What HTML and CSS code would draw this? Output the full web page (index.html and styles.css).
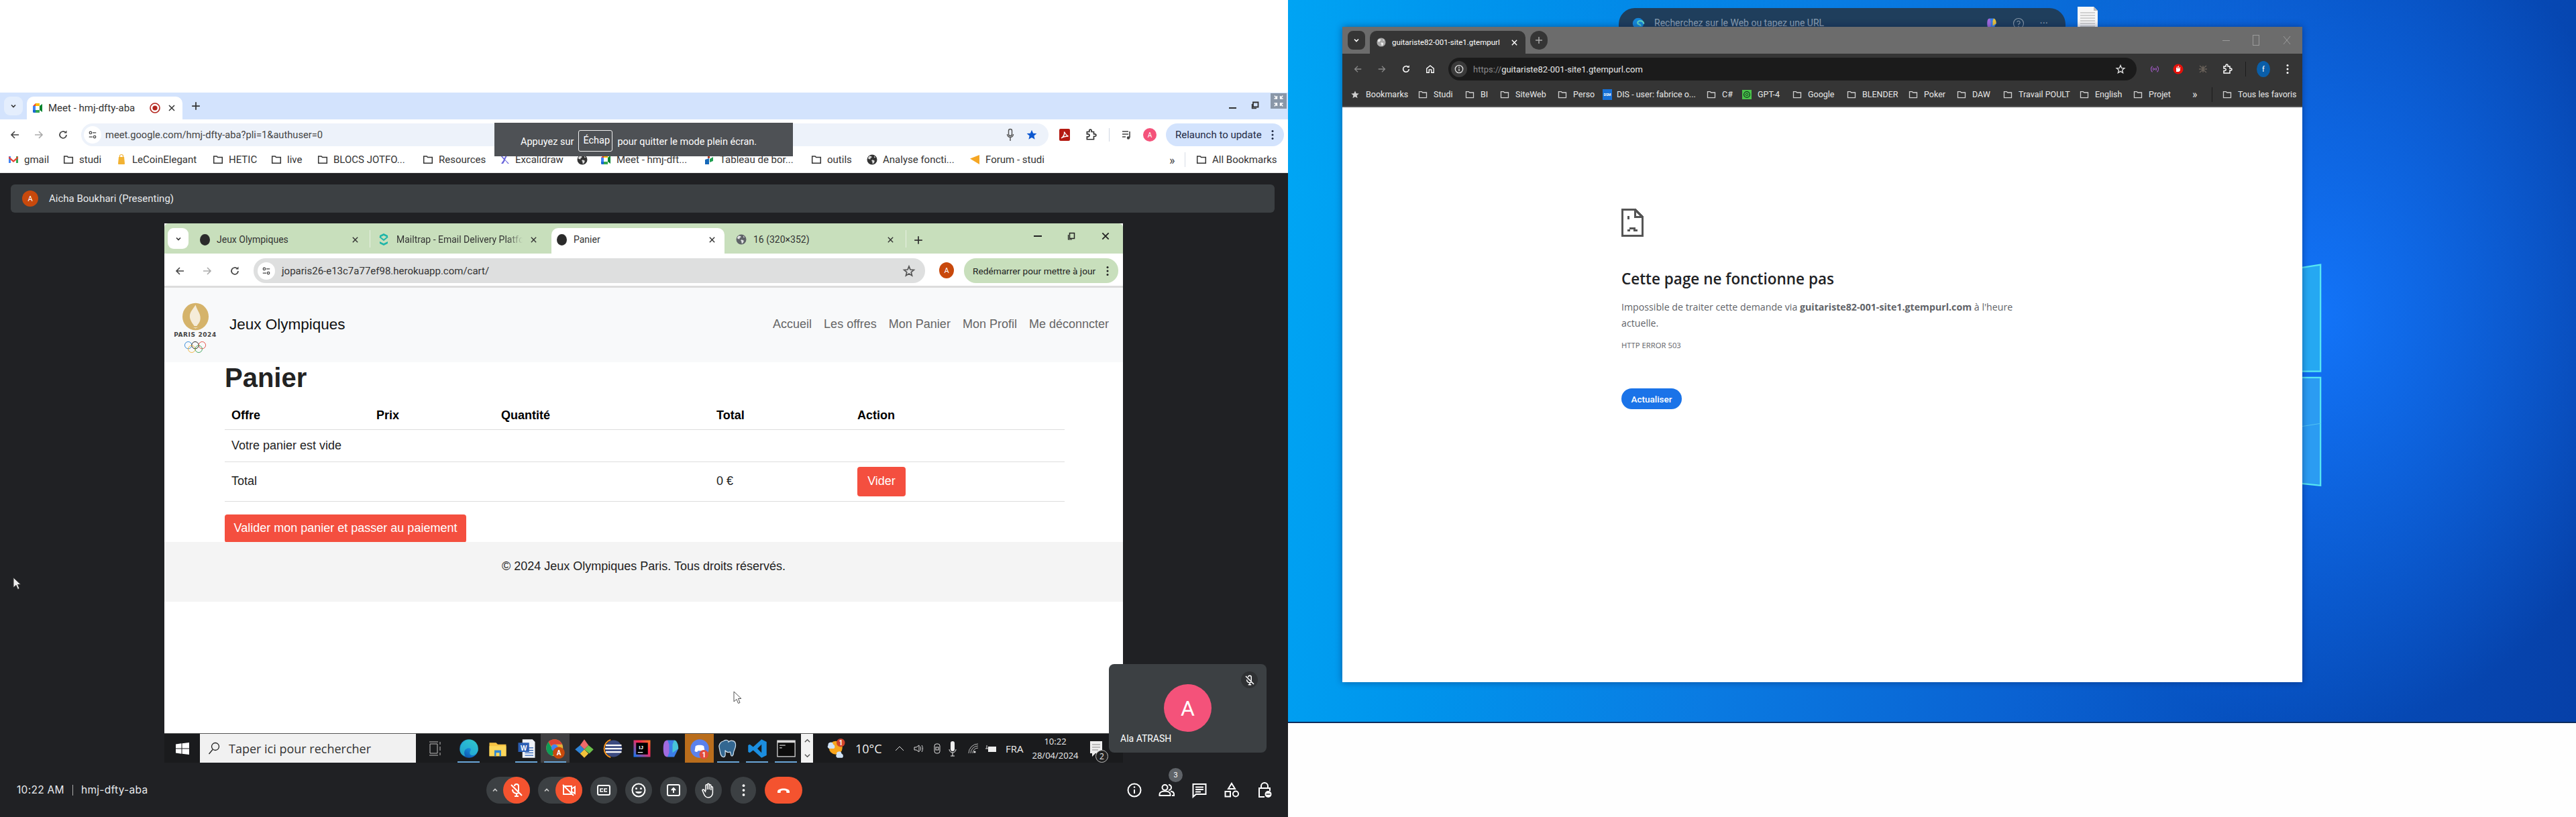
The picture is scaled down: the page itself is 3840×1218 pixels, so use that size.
FILE: index.html
```html
<!DOCTYPE html>
<html lang="fr">
<head>
<meta charset="utf-8">
<title>Meet - hmj-dfty-aba</title>
<link rel="stylesheet" href="styles.css">
</head>
<body>
<svg class="defs" aria-hidden="true">
  <symbol id="folder" viewBox="0 0 16 16"><path d="M1.7 3h4.4l1.5 1.6h6.7v8.7H1.7z" fill="none" stroke="currentColor" stroke-width="1.5"/></symbol>
  <symbol id="globe" viewBox="0 0 16 16"><circle cx="8" cy="8" r="7.5" fill="currentColor"/><path d="M4 2.6l3 .4.6 1.6-2 1.2-.3 1.6-2.4-.4-1-1.5zM8.2 8.3l3.2.9.2 2-1.8 2.8-1.2-.3-.3-2.6-1.200-1.300zM11 2.500l2.200 2.300-1.900.5z" fill="#fff" opacity=".82"/></symbol>
  <symbol id="x" viewBox="0 0 12 12"><path d="M2 2l8 8M10 2l-8 8" stroke="currentColor" stroke-width="1.500" fill="none"/></symbol>
  <symbol id="plus" viewBox="0 0 12 12"><path d="M6 1v10M1 6h10" stroke="currentColor" stroke-width="1.500" fill="none"/></symbol>
  <symbol id="chev" viewBox="0 0 12 12"><path d="M3 4.500l3 3 3-3" stroke="currentColor" stroke-width="1.600" fill="none"/></symbol>
  <symbol id="back" viewBox="0 0 16 16"><path d="M14 8H3M8 3L3 8l5 5" stroke="currentColor" stroke-width="1.600" fill="none"/></symbol>
  <symbol id="fwd" viewBox="0 0 16 16"><path d="M2 8h11M8 3l5 5-5 5" stroke="currentColor" stroke-width="1.600" fill="none"/></symbol>
  <symbol id="reload" viewBox="0 0 16 16"><path d="M13 8a5 5 0 1 1-1.500-3.600" stroke="currentColor" stroke-width="1.700" fill="none"/><path d="M13.500 1.500v4h-4z" fill="currentColor"/></symbol>
  <symbol id="tune" viewBox="0 0 16 16"><path d="M8 4.500h6M2 11.500h6" stroke="currentColor" stroke-width="1.500"/><circle cx="4.500" cy="4.500" r="2" fill="none" stroke="currentColor" stroke-width="1.400"/><circle cx="11.500" cy="11.500" r="2" fill="none" stroke="currentColor" stroke-width="1.400"/></symbol>
  <symbol id="star" viewBox="0 0 16 16"><path d="M8 1.600l1.900 4.300 4.700.4-3.600 3.100 1.100 4.600L8 11.600 3.900 14l1.100-4.600-3.600-3.100 4.700-.4z" fill="currentColor"/></symbol>
  <symbol id="star-o" viewBox="0 0 16 16"><path d="M8 2.500l1.600 3.900 4.200.3-3.200 2.700 1 4.100L8 11.300l-3.600 2.200 1-4.100-3.200-2.700 4.200-.3z" fill="none" stroke="currentColor" stroke-width="1.400"/></symbol>
  <symbol id="dots" viewBox="0 0 4 16"><circle cx="2" cy="2.500" r="1.500" fill="currentColor"/><circle cx="2" cy="8" r="1.500" fill="currentColor"/><circle cx="2" cy="13.500" r="1.500" fill="currentColor"/></symbol>
  <symbol id="puzzle" viewBox="0 0 16 16"><path d="M3 4h3V2.500a1.500 1.500 0 0 1 3 0V4h3v3h1.500a1.500 1.500 0 0 1 0 3H12v4H3v-3.500h1.500a1.700 1.700 0 0 0 0-3.500H3z" fill="none" stroke="currentColor" stroke-width="1.500"/></symbol>
  <symbol id="meeticon" viewBox="0 0 16 16"><path d="M1 5l4-4v4z" fill="#ea4335"/><path d="M1 5h4v6H1z" fill="#4285f4"/><path d="M1 11h4v4H2.500A1.500 1.500 0 0 1 1 13.500z" fill="#1967d2"/><path d="M5 1h6v4H5z" fill="#fbbc04"/><path d="M5 11h6v4H5z" fill="#34a853"/><path d="M5 5h6v6H5z" fill="#fff"/><path d="M11 5l4-3v12l-4-3z" fill="#00832d"/></symbol>
  <symbol id="micoff" viewBox="0 0 24 24"><path d="M9 6a3 3 0 0 1 6 0v6a3 3 0 0 1-.5 1.700M6 11a6 6 0 0 0 9 5.200M12 17v4M9 21h6" fill="none" stroke="currentColor" stroke-width="2"/><path d="M4 4l16 16" stroke="currentColor" stroke-width="2"/></symbol>
</svg>

<div class="screens">
  <section class="screen-left">
    <div class="blank-top"></div>
    <div class="meet-chrome">
      <div class="mc-tabs">
        <span class="mc-chev"><svg class="ic12"><use href="#chev"/></svg></span>
        <div class="mc-tab">
          <svg class="ic16"><use href="#meeticon"/></svg>
          <span class="mc-title">Meet - hmj-dfty-aba</span>
          <svg class="ic-rec" viewBox="0 0 16 16"><circle cx="8" cy="8" r="7" fill="none" stroke="#b3261e" stroke-width="1.600"/><circle cx="8" cy="8" r="3.600" fill="#b3261e"/></svg>
          <svg class="ic12 mc-close"><use href="#x"/></svg>
        </div>
        <svg class="ic14 mc-new"><use href="#plus"/></svg>
        <div class="mc-winbtns">
          <span class="mc-min"></span>
          <svg class="ic-rest" viewBox="0 0 12 12"><path d="M3 1.500h7.500v7H3z" fill="none" stroke="#333" stroke-width="1.800"/><path d="M1.500 4v6.500H8" fill="none" stroke="#333" stroke-width="1.400"/></svg>
          <span class="mc-exit"><svg viewBox="0 0 20 24" class="ic-exit"><path d="M3 3l4 5M7 3.500V8H2.500M17 3l-4 5M13 3.500V8h4.500M3 21l4-5M7 20.500V16H2.500M17 21l-4-5M13 20.500V16h4.500" stroke="#fff" stroke-width="1.800" fill="none"/></svg></span>
        </div>
      </div>
      <div class="mc-toolbar">
        <div class="navbox"><span class="nav"><svg class="ic16"><use href="#back"/></svg></span><span class="nav dim"><svg class="ic16"><use href="#fwd"/></svg></span><span class="nav"><svg class="ic16"><use href="#reload"/></svg></span></div>
        <div class="mc-omni">
          <span class="site-chip"><svg class="ic14"><use href="#tune"/></svg></span>
          <span class="mc-url">meet.google.com/hmj-dfty-aba?pli=1&amp;authuser=0</span>
          <svg class="ic-mic" viewBox="0 0 12 20"><rect x="3.500" y="1.500" width="5" height="10" rx="2.500" fill="none" stroke="#555" stroke-width="1.500"/><path d="M1.500 9a4.500 4.500 0 0 0 9 0M6 14v5" stroke="#555" stroke-width="1.500" fill="none"/></svg>
          <svg class="ic18 mc-star"><use href="#star"/></svg>
        </div>
        <div class="mc-tools">
          <svg class="ic-pdf" viewBox="0 0 16 18"><rect width="16" height="18" rx="2" fill="#b41a12"/><path d="M3 14c3-2 5-6 4.500-9.500C10 9 11 10 13.500 11c-3 0-7 .5-10.500 3z" fill="none" stroke="#fff" stroke-width="1.300"/></svg>
          <svg class="ic18 dark"><use href="#puzzle"/></svg>
          <span class="mc-sep"></span>
          <svg class="ic-queue" viewBox="0 0 16 16"><path d="M1 3h9M1 7h9M1 11h5" stroke="#444" stroke-width="1.600"/><path d="M12 3v9" stroke="#444" stroke-width="1.600"/><circle cx="10" cy="12.500" r="2.200" fill="#444"/></svg>
          <span class="avatar-pink">A</span>
          <span class="relaunch">Relaunch to update<svg class="ic-dots"><use href="#dots"/></svg></span>
        </div>
      </div>
      <div class="mc-bookmarks">
        <span class="bk"><svg class="ic16" viewBox="0 0 16 16"><path d="M1 3h3v10H1z" fill="#4285f4"/><path d="M12 3h3v10h-3z" fill="#34a853"/><path d="M1 3l7 6 7-6v3l-7 6-7-6z" fill="#ea4335"/></svg>gmail</span>
        <span class="bk"><svg class="ic16"><use href="#folder"/></svg>studi</span>
        <span class="bk"><svg class="ic16" viewBox="0 0 16 16"><path d="M4 4h8l1 10a1 1 0 0 1-1 1H4a1 1 0 0 1-1-1z" fill="#f2b233"/><path d="M5.500 4V2.500a2.500 2 0 0 1 5 0V4" fill="none" stroke="#f2b233" stroke-width="1.200"/></svg>LeCoinElegant</span>
        <span class="bk"><svg class="ic16"><use href="#folder"/></svg>HETIC</span>
        <span class="bk"><svg class="ic16"><use href="#folder"/></svg>live</span>
        <span class="bk"><svg class="ic16"><use href="#folder"/></svg>BLOCS JOTFO...</span>
        <span class="bk"><svg class="ic16"><use href="#folder"/></svg>Resources</span>
        <span class="bk"><svg class="ic16" viewBox="0 0 16 16"><path d="M2 2l5 6-4 6h3l3-5 4 5h2L9 8l3-6h-2L7.500 6 4 2z" fill="#6965db"/></svg>Excalidraw</span>
        <span class="bk"><svg class="ic16 dark"><use href="#globe"/></svg></span>
        <span class="bk"><svg class="ic16"><use href="#meeticon"/></svg>Meet - hmj-dft...</span>
        <span class="bk"><svg class="ic16" viewBox="0 0 16 16"><path d="M2 8l6-2v9H2z" fill="#1668b8"/><path d="M9 7l5-3v6l-5 2z" fill="#1e9e50"/><path d="M6 1h3v5H6z" fill="#b5442c"/></svg>Tableau de bor...</span>
        <span class="bk"><svg class="ic16"><use href="#folder"/></svg>outils</span>
        <span class="bk"><svg class="ic16 dark"><use href="#globe"/></svg>Analyse foncti...</span>
        <span class="bk"><svg class="ic16" viewBox="0 0 16 16"><path d="M15 1v14L1 6.500z" fill="#f5a623"/></svg>Forum - studi</span>
        <span class="bk-more">»</span>
        <span class="bk-sep"></span>
        <span class="bk"><svg class="ic16"><use href="#folder"/></svg>All Bookmarks</span>
      </div>
    </div>

    <div class="stage">
      <div class="presenter"><span class="avatar-orange">A</span>Aicha Boukhari (Presenting)</div>

      <div class="shared">
        <div class="sw-tabs">
          <span class="sw-chev"><svg class="ic12"><use href="#chev"/></svg></span>
          <div class="sw-tab sw-t1"><span class="blob"></span><span class="sw-tt">Jeux Olympiques</span><svg class="ic11"><use href="#x"/></svg></div>
          <span class="sw-div"></span>
          <div class="sw-tab sw-t2"><svg class="ic-mt" viewBox="0 0 16 20"><path d="M2 7V4l6-3 6 3v3l-6-3z M2 13v3l6 3 6-3v-3l-6 3z" fill="#1fb5a8"/><path d="M2 6l6 5 6-5" stroke="#1fb5a8" stroke-width="2" fill="none"/></svg><span class="sw-tt fade">Mailtrap - Email Delivery Platfo</span><svg class="ic11"><use href="#x"/></svg></div>
          <div class="sw-tab sw-active"><span class="blob"></span><span class="sw-tt">Panier</span><svg class="ic11"><use href="#x"/></svg></div>
          <div class="sw-tab sw-t4"><svg class="ic16 greyish"><use href="#globe"/></svg><span class="sw-tt">16 (320×352)</span><svg class="ic11"><use href="#x"/></svg></div>
          <span class="sw-div"></span>
          <svg class="ic14 sw-new"><use href="#plus"/></svg>
          <div class="sw-winbtns"><span class="sw-min"></span><svg class="ic-rest" viewBox="0 0 12 12"><path d="M3.500 1.500h7v8h-7z" fill="none" stroke="#222" stroke-width="1.500"/><path d="M1.500 4v7H7" fill="none" stroke="#222" stroke-width="1.200"/></svg><svg class="ic14 sw-close"><use href="#x"/></svg></div>
        </div>
        <div class="sw-toolbar">
          <div class="navbox sw-nav"><span class="nav"><svg class="ic16"><use href="#back"/></svg></span><span class="nav dim"><svg class="ic16"><use href="#fwd"/></svg></span><span class="nav"><svg class="ic16"><use href="#reload"/></svg></span></div>
          <div class="sw-omni"><span class="site-chip"><svg class="ic14"><use href="#tune"/></svg></span><span class="sw-url">joparis26-e13c7a77ef98.herokuapp.com/cart/</span><svg class="ic20 sw-star"><use href="#star-o"/></svg></div>
          <span class="avatar-orange sw-av">A</span>
          <span class="sw-relaunch">Redémarrer pour mettre à jour<svg class="ic-dots"><use href="#dots"/></svg></span>
        </div>
        <div class="site">
          <header class="site-head">
            <div class="logo">
              <svg class="flame" viewBox="0 0 42 60" preserveAspectRatio="none"><ellipse cx="21" cy="30" rx="20" ry="29" fill="#d5b36a"/><path d="M21 5c-5 12-12 18-7 34 2 6 4 8 5 11h4c1-3 4-6 5-12 2-13-4-19-7-33z" fill="#fff" opacity=".75"/><path d="M16 52c3 2 7 2 10 0l-5 3z" fill="#fff"/></svg>
              <span class="logo-txt">PARIS 2024</span>
              <svg class="rings" viewBox="0 0 36 20"><circle cx="7" cy="7" r="5.500" fill="none" stroke="#2e86d6"/><circle cx="18" cy="7" r="5.500" fill="none" stroke="#222"/><circle cx="29" cy="7" r="5.500" fill="none" stroke="#e4493d"/><circle cx="12.500" cy="13" r="5.500" fill="none" stroke="#eeb23c"/><circle cx="23.500" cy="13" r="5.500" fill="none" stroke="#3da35a"/></svg>
            </div>
            <span class="brand">Jeux Olympiques</span>
            <nav class="site-nav"><a>Accueil</a><a>Les offres</a><a>Mon Panier</a><a>Mon Profil</a><a>Me déconncter</a></nav>
          </header>
          <main class="site-main">
            <h1>Panier</h1>
            <table class="cart">
              <thead><tr><th class="c1">Offre</th><th class="c2">Prix</th><th class="c3">Quantité</th><th class="c4">Total</th><th class="c5">Action</th></tr></thead>
              <tbody>
                <tr class="r1"><td colspan="5">Votre panier est vide</td></tr>
                <tr class="r2"><td>Total</td><td></td><td></td><td>0 €</td><td><span class="btn btn-vider">Vider</span></td></tr>
              </tbody>
            </table>
            <span class="btn btn-valider">Valider mon panier et passer au paiement</span>
          </main>
          <footer class="site-foot">© 2024 Jeux Olympiques Paris. Tous droits réservés.</footer>
          <div class="site-rest"></div>
        </div>
        <div class="win-taskbar">
          <span class="tb-start"><svg class="ic-win" viewBox="0 0 20 18"><path d="M0 2.500L8.500 1.300V8.500H0zM9.500 1.200L20 0v8.500H9.500zM0 9.500h8.500v7.200L0 15.500zM9.500 9.500H20V18L9.500 16.800z" fill="#fff"/></svg></span>
          <span class="tb-search"><svg class="ic-mag" viewBox="0 0 18 20"><circle cx="11" cy="7" r="5.500" fill="none" stroke="#222" stroke-width="1.300"/><path d="M7 11.500L1.500 18" stroke="#222" stroke-width="1.300"/></svg>Taper ici pour rechercher</span>
          <span class="tb-view"><svg class="ic-tv" viewBox="0 0 20 24"><path d="M2 5h11v14H2zM1 2h13M1 22h13M17 2v4M17 9v6M17 18v4" fill="none" stroke="#bbb" stroke-width="1"/></svg></span>
          <div class="tb-apps">
            <span class="app run"><svg class="ic30" viewBox="0 0 24 24"><defs><linearGradient id="edg" x1="0.800" y1="0" x2="0.200" y2="1"><stop offset="0" stop-color="#35c9c0"/><stop offset=".5" stop-color="#1687d9"/><stop offset="1" stop-color="#0b4fa8"/></linearGradient></defs><circle cx="12" cy="12" r="11" fill="url(#edg)"/><path d="M23 14c-1 4-4 6-7 6-2 0-3-1-3-3s2-3 1-5c-1-1-4-1-6 1-2 2-2 6 0 8C2 20 0 15 2 9c2-5 7-8 12-7 6 1 9 6 9 12z" fill="#2fc4d0" opacity=".7"/></svg></span>
            <span class="app"><svg class="ic30" viewBox="0 0 24 24"><path d="M2 5h8l2 2h10v14H2z" fill="#f6c343"/><path d="M2 9h20v12H2z" fill="#fbd75b"/><path d="M8 14h8v7h-2v-4h-4v4H8z" fill="#2f87d3"/></svg></span>
            <span class="app run"><svg class="ic30" viewBox="0 0 24 24"><path d="M7 1h12l3 3v19H7z" fill="#eef2f7"/><path d="M10 11h10M10 14h10M10 17h10M10 20h10" stroke="#2b5fb4"/><rect x="2" y="5" width="13" height="11" fill="#2b5fb4"/><text x="8.500" y="14" class="w-letter">W</text></svg></span>
            <span class="app app-on run"><svg class="ic30" viewBox="0 0 24 24"><circle cx="11" cy="11" r="10" fill="#e0b03a"/><path d="M11 1a10 10 0 0 1 9 6H11a4 4 0 0 0-4 2L3.500 4A10 10 0 0 1 11 1z" fill="#db4437"/><path d="M1 11c0-2 .8-5 2.500-7L7 10c.5 3 2 5 5 5L8 21A10 10 0 0 1 1 11z" fill="#0f9d58"/><circle cx="11" cy="11" r="4" fill="#4285f4"/><circle cx="16" cy="17" r="7" fill="#c8490c"/><text x="16" y="20" class="c-letter">A</text></svg></span>
            <span class="app"><svg class="ic30" viewBox="0 0 24 24"><path d="M12 1l5 7-5 5-5-5z" fill="#ef6a6a"/><path d="M7 8l5 5-5 5-6-5z" fill="#2f83d6"/><path d="M17 8l6 5-5 5-6-5z" fill="#6cc04a"/><path d="M12 13l5 5-5 5-5-5z" fill="#f2c23b"/></svg></span>
            <span class="app"><svg class="ic30" viewBox="0 0 24 24"><circle cx="12.500" cy="12" r="10" fill="#3b4a80"/><path d="M3 8h19M2.500 12h20M3 16h19" stroke="#fff" stroke-width="1.800"/><path d="M9 1.500A11 11 0 0 0 9 22.500" fill="none" stroke="#f7941e" stroke-width="1.500"/></svg></span>
            <span class="app"><svg class="ic30" viewBox="0 0 24 24"><defs><linearGradient id="ij" x1="0" y1="1" x2="1" y2="0"><stop offset="0" stop-color="#087cfa"/><stop offset=".6" stop-color="#fe2857"/><stop offset="1" stop-color="#fc801d"/></linearGradient></defs><rect x="2" y="2" width="20" height="20" fill="url(#ij)"/><rect x="5" y="5" width="14" height="14" fill="#000"/><text x="11" y="13" class="ij-letter">IJ</text><path d="M7 16.500h6" stroke="#fff"/></svg></span>
            <span class="app"><svg class="ic30" viewBox="0 0 24 24"><path d="M8 2h8l5 10-5 10H8z" fill="#3b7ee8"/><path d="M8 2c-4 0-5 4-5 10s1 10 5 10l2-5V7z" fill="#a16be0"/><path d="M16 2c3 0 5 5 5 10l-7 5V7z" fill="#48c4d8"/></svg></span>
            <span class="app app-orange"><svg class="ic30" viewBox="0 0 24 24"><circle cx="12" cy="12" r="11" fill="#5b82ec"/><path d="M7 9c3-1.500 7-1.500 10 0l1 6c-1 1-2 1-3 1l-1-1.500h-4L9 16c-1 0-2 0-3-1z" fill="#fff"/><circle cx="17" cy="19" r="5.500" fill="#e24c3c"/><text x="17" y="22" class="d-letter">1</text></svg></span>
            <span class="app run"><svg class="ic30" viewBox="0 0 24 24"><path d="M6 3c3-2 6-1 6 1 2-2 7-2 8 1 2 5-2 9-2 12s-2 5-3 3l-1-4c-3 1-5 0-6-2 0 3 1 8-2 8-4 0-4-7-5-11C0 8 2 4 6 3z" fill="#336791" stroke="#cfe0ee" stroke-width="1"/></svg></span>
            <span class="app run"><svg class="ic30" viewBox="0 0 24 24"><path d="M17 1l6 3v16l-6 3L7 14l-4 3-2-1V8l2-1 4 3zM17 7l-5 5 5 5z" fill="#1b8ee0"/></svg></span>
            <span class="app run"><svg class="ic30" viewBox="0 0 24 24"><rect x="1" y="2" width="22" height="20" fill="#dcdcdc"/><rect x="2" y="5" width="20" height="16" fill="#0c0c0c"/><path d="M4 8h7M4 11h3" stroke="#ccc"/></svg></span>
          </div>
          <span class="tb-scroll"><svg class="ic11" viewBox="0 0 12 12"><path d="M2 8l4-4 4 4" fill="none" stroke="#555" stroke-width="1.500"/></svg><svg class="ic11" viewBox="0 0 12 12"><path d="M2 4l4 4 4-4" fill="none" stroke="#555" stroke-width="1.500"/></svg></span>
          <div class="tb-tray">
            <span class="tr"><svg class="ic30" viewBox="0 0 24 24"><circle cx="11" cy="11" r="8" fill="#f7a51c"/><path d="M2 8a3 3 0 0 1 6-1 3 3 0 0 1 1 5H3a2.500 2.500 0 0 1-1-4zM12 19a3 3 0 0 1 6-1 3 3 0 0 1 1 5h-6a2.500 2.500 0 0 1-1-4z" fill="#cfe2f5"/><circle cx="17" cy="5" r="5" fill="#d0432b"/><text x="17" y="8" class="d-letter">1</text></svg></span>
            <span class="tr tr-temp">10°C</span>
            <span class="tr"><svg class="ic14" viewBox="0 0 14 14"><path d="M1 10l6-6 6 6" fill="none" stroke="#ddd" stroke-width="1"/></svg></span>
            <span class="tr"><svg class="ic18" viewBox="0 0 18 18"><path d="M2 7h3l4-3v10l-4-3H2z" fill="none" stroke="#ddd"/><path d="M11 6c1 2 1 4 0 6M13 4c2 3 2 7 0 10" fill="none" stroke="#ddd"/></svg></span>
            <span class="tr"><svg class="ic18" viewBox="0 0 18 18"><rect x="5" y="2" width="8" height="14" rx="3" fill="none" stroke="#ddd"/><rect x="7" y="7" width="4" height="4" fill="none" stroke="#ddd"/></svg></span>
            <span class="tr"><svg class="ic-trmic" viewBox="0 0 12 24"><rect x="3" y="1" width="6" height="15" rx="3" fill="#eee"/><path d="M1 13a5 5 0 0 0 10 0M6 18v5M3 23h6" stroke="#eee" fill="none"/></svg></span>
            <span class="tr"><svg class="ic18" viewBox="0 0 18 18"><path d="M2 16A14 14 0 0 1 16 2M5 16A11 11 0 0 1 16 5M8 16a8 8 0 0 1 8-8" fill="none" stroke="#bbb"/><circle cx="11" cy="14" r="1.500" fill="#eee"/></svg></span>
            <span class="tr"><svg class="ic18" viewBox="0 0 18 18"><rect x="5" y="6" width="12" height="8" fill="#eee"/><path d="M1 9h4M3 4v5" stroke="#ddd"/></svg></span>
            <span class="tr tr-lang">FRA</span>
            <span class="tr-clock"><span>10:22</span><span>28/04/2024</span></span>
            <span class="tr tr-note"><svg class="ic-note" viewBox="0 0 20 26"><path d="M1 1h18v18H9l-5 5v-5H1z" fill="#eee"/><path d="M4 6h12M4 10h12M4 14h9" stroke="#888"/></svg><span class="note-count">2</span></span>
          </div>
        </div>
      </div>

      <div class="meet-bar">
        <div class="meet-id"><span>10:22 AM</span><span class="meet-sep"></span><span>hmj-dfty-aba</span></div>
        <div class="controls">
          <span class="pill"><svg class="ic12 up"><use href="#chev"/></svg><span class="red-dot"><svg class="ic24"><use href="#micoff"/></svg></span></span>
          <span class="pill pill-cam"><svg class="ic12 up"><use href="#chev"/></svg><span class="red-dot"><svg class="ic24" viewBox="0 0 24 24"><path d="M4 6h12v12H4zM16 10l5-3v10l-5-3M3 4l16 16" fill="none" stroke="#fff" stroke-width="2"/></svg></span></span>
          <span class="round"><svg class="ic24" viewBox="0 0 24 24"><rect x="3" y="5" width="18" height="14" rx="2" fill="none" stroke="#fff" stroke-width="2"/><path d="M11 10H7v4h4M17 10h-4v4h4" fill="none" stroke="#fff" stroke-width="1.600"/></svg></span>
          <span class="round"><svg class="ic24" viewBox="0 0 24 24"><circle cx="12" cy="12" r="9.500" fill="none" stroke="#fff" stroke-width="2"/><circle cx="8.500" cy="9.500" r="1.500" fill="#fff"/><circle cx="15.500" cy="9.500" r="1.500" fill="#fff"/><path d="M7 14c1 4 9 4 10 0z" fill="#fff"/></svg></span>
          <span class="round"><svg class="ic24" viewBox="0 0 24 24"><rect x="3" y="4" width="18" height="16" rx="2" fill="none" stroke="#fff" stroke-width="2"/><path d="M12 16v-6M9 12l3-3 3 3" fill="none" stroke="#fff" stroke-width="2"/></svg></span>
          <span class="round"><svg class="ic24" viewBox="0 0 24 24"><path d="M8 13V5a1.300 1.300 0 0 1 2.600 0v6V3.500a1.300 1.300 0 0 1 2.600 0V11V5a1.300 1.300 0 0 1 2.600 0v7V8a1.300 1.300 0 0 1 2.600 0v8c0 4-3 7-6.500 7S6.500 21 5 17l-2-5c0-1.500 2-1.500 3 0l2 3" fill="none" stroke="#fff" stroke-width="1.500"/></svg></span>
          <span class="round round-more"><svg class="ic-dots2"><use href="#dots"/></svg></span>
          <span class="round-end"><svg class="ic24" viewBox="0 0 24 24"><path d="M3 14c0-6 18-6 18 0v2h-4.500l-.5-3c-2-1-6-1-8 0l-.5 3H3z" fill="#fff"/></svg></span>
        </div>
        <div class="side-icons">
          <span class="si"><svg class="ic24" viewBox="0 0 24 24"><circle cx="12" cy="12" r="9.500" fill="none" stroke="#fff" stroke-width="2"/><path d="M12 11v6" stroke="#fff" stroke-width="2"/><circle cx="12" cy="7.500" r="1.300" fill="#fff"/></svg></span>
          <span class="si"><svg class="ic24" viewBox="0 0 24 24"><circle cx="9.500" cy="8" r="4" fill="none" stroke="#fff" stroke-width="2"/><path d="M1.500 20v-2c0-3 4-4.500 8-4.500s8 1.500 8 4.500v2z" fill="none" stroke="#fff" stroke-width="2"/><path d="M15 4a4 4 0 0 1 0 8M18 13.500c3 .5 5 2 5 4.500v2h-3" fill="none" stroke="#fff" stroke-width="2"/></svg><span class="people-badge">3</span></span>
          <span class="si"><svg class="ic24" viewBox="0 0 24 24"><path d="M2.500 3h19v15H7l-4.500 4z" fill="none" stroke="#fff" stroke-width="2"/><path d="M6 7.500h12M6 11h12M6 14.500h8" stroke="#fff" stroke-width="1.800"/></svg></span>
          <span class="si"><svg class="ic24" viewBox="0 0 24 24"><path d="M12 2l5 8H7z" fill="none" stroke="#fff" stroke-width="2"/><rect x="2.500" y="14" width="7.500" height="7.500" fill="none" stroke="#fff" stroke-width="2"/><circle cx="18" cy="17.500" r="4" fill="none" stroke="#fff" stroke-width="2"/></svg></span>
          <span class="si"><svg class="ic24" viewBox="0 0 24 24"><path d="M7 9V6a5 5 0 0 1 10 0v3M12 22H4V9h16v4" fill="none" stroke="#fff" stroke-width="2"/><circle cx="17.500" cy="18" r="5" fill="#fff"/><path d="M14.500 18h6" stroke="#202124" stroke-width="1.400"/></svg></span>
        </div>
      </div>

      <aside class="tile">
        <span class="tile-mute"><svg class="ic18"><use href="#micoff"/></svg></span>
        <span class="tile-avatar">A</span>
        <span class="tile-name">Ala ATRASH</span>
      </aside>
    </div>

    <div class="toast">Appuyez sur<span class="esc">Échap</span>pour quitter le mode plein écran.</div>
    <svg class="cur cur-left" viewBox="0 0 12 20"><path d="M1 1v15l4-3.500 2.500 6 2.500-1-2.500-6H12z" fill="#eee" stroke="#333"/></svg>
    <svg class="cur cur-shared" viewBox="0 0 12 20"><path d="M1 1v15l4-3.500 2.500 6 2.500-1-2.500-6H12z" fill="#fff" stroke="#555"/></svg>
  </section>

  <section class="screen-right">
    <div class="desktop">
      <svg class="logo-panes" viewBox="0 0 40 360"><path d="M0 6L38 0V172H0z" fill="#25a8f2" stroke="#56e6f2" stroke-width="2.500"/><path d="M0 182H38V356L0 352z" fill="#2b9cf2" stroke="#56e6f2" stroke-width="2.500"/><path d="M0 262L38 256" stroke="#56c6f2" fill="none"/></svg>
      <div class="edge-back">
        <svg class="ic-eb" viewBox="0 0 24 24"><circle cx="12" cy="12" r="11" fill="#1687d9"/><path d="M23 13c0-5-5-7-9-6-3 1-4 4-2 6 2 1 5 1 5 4" fill="none" stroke="#5fd3c4" stroke-width="3"/></svg>
        <span class="eb-text">Recherchez sur le Web ou tapez une URL</span>
        <div class="eb-right">
          <svg class="ic-eb" viewBox="0 0 24 24"><path d="M8 2h8l5 10-5 10H8z" fill="#3b7ee8"/><path d="M8 2c-4 0-5 4-5 10s1 10 5 10l2-5V7z" fill="#a16be0"/><path d="M16 2c3 0 5 5 5 10l-7 5V7z" fill="#e9c33e"/></svg>
          <svg class="ic-eb" viewBox="0 0 24 24"><circle cx="12" cy="12" r="10" fill="none" stroke="#8898a8" stroke-width="1.500"/><path d="M9 9a3 3 0 1 1 3 4v2M12 17v1.500" fill="none" stroke="#8898a8" stroke-width="1.500"/></svg>
          <span class="eb-dots">···</span>
        </div>
      </div>
      <svg class="file-ic" viewBox="0 0 30 32"><path d="M0 0h24l6 6v26H0z" fill="#f7f7f7"/><path d="M24 0v6h6z" fill="#bbb"/><path d="M4 9h22M4 13h22M4 17h22M4 21h22M4 25h22M4 29h22" stroke="#aaa"/></svg>

      <div class="error-win">
        <div class="ew-tabs">
          <span class="ew-chev"><svg class="ic12"><use href="#chev"/></svg></span>
          <div class="ew-tab"><svg class="ic14 grey6"><use href="#globe"/></svg><span class="ew-title">guitariste82-001-site1.gtempurl</span><svg class="ic11"><use href="#x"/></svg></div>
          <span class="ew-new"><svg class="ic12"><use href="#plus"/></svg></span>
          <div class="ew-winbtns"><span class="ew-min"></span><span class="ew-max"></span><svg class="ic14" viewBox="0 0 14 14"><path d="M2 1l10 12M12 1L2 13" stroke="#9c9c9c" fill="none"/></svg></div>
        </div>
        <div class="ew-toolbar">
          <div class="ew-nav"><svg class="ic14 grey9"><use href="#back"/></svg><svg class="ic14 grey9"><use href="#fwd"/></svg><svg class="ic14"><use href="#reload"/></svg><svg class="ic14" viewBox="0 0 16 16"><path d="M2 7l6-5 6 5v7h-4V9H6v5H2z" fill="none" stroke="#fff" stroke-width="1.500"/></svg></div>
          <div class="ew-omni">
            <span class="ew-info"><svg class="ic14" viewBox="0 0 16 16"><circle cx="8" cy="8" r="6.500" fill="none" stroke="#ddd" stroke-width="1.500"/><path d="M8 7v4.500" stroke="#ddd" stroke-width="1.500"/><circle cx="8" cy="4.800" r="1" fill="#ddd"/></svg></span>
            <span class="ew-url"><span class="dimurl">https://</span>guitariste82-001-site1.gtempurl.com</span>
            <svg class="ic16 ew-star"><use href="#star-o"/></svg>
          </div>
          <div class="ew-tools">
            <svg class="ic14" viewBox="0 0 16 16"><path d="M4 3C1 6 1 10 4 13M12 3c3 3 3 7 0 10M6 5.500c-1 1.500-1 3.500 0 5M10 5.500c1 1.500 1 3.500 0 5" fill="none" stroke="#a45bc8" stroke-width="1.300"/><circle cx="8" cy="8" r="1.200" fill="#a45bc8"/></svg>
            <svg class="ic16" viewBox="0 0 16 16"><circle cx="8" cy="8" r="7.500" fill="#e3120b"/><path d="M5 12V6h1V4h1v3h1V3h1v4h1V5h1v5l-2 2z" fill="#fff"/></svg>
            <svg class="ic16" viewBox="0 0 16 16"><path d="M8 3v10M3 3l5 4 5-4M2 8h12M3 13l5-4 5 4" stroke="#6a625a" stroke-width="1.400" fill="none"/></svg>
            <svg class="ic16"><use href="#puzzle"/></svg>
            <span class="ew-sep"></span>
            <span class="ew-avatar">f</span>
            <svg class="ic-dots"><use href="#dots"/></svg>
          </div>
        </div>
        <div class="ew-bookmarks">
          <span class="bk2"><svg class="ic14"><use href="#star"/></svg>Bookmarks</span>
          <span class="bk2"><svg class="ic14"><use href="#folder"/></svg>Studi</span>
          <span class="bk2"><svg class="ic14"><use href="#folder"/></svg>BI</span>
          <span class="bk2"><svg class="ic14"><use href="#folder"/></svg>SiteWeb</span>
          <span class="bk2"><svg class="ic14"><use href="#folder"/></svg>Perso</span>
          <span class="bk2"><span class="dsm">DSM</span>DIS - user: fabrice o...</span>
          <span class="bk2"><svg class="ic14"><use href="#folder"/></svg>C#</span>
          <span class="bk2"><svg class="ic14" viewBox="0 0 16 16"><rect width="16" height="16" fill="#4ac24a"/><circle cx="8" cy="8" r="5" fill="none" stroke="#0d3d1d" stroke-width="1.500"/><circle cx="8" cy="8" r="2" fill="none" stroke="#0d3d1d"/></svg>GPT-4</span>
          <span class="bk2"><svg class="ic14"><use href="#folder"/></svg>Google</span>
          <span class="bk2"><svg class="ic14"><use href="#folder"/></svg>BLENDER</span>
          <span class="bk2"><svg class="ic14"><use href="#folder"/></svg>Poker</span>
          <span class="bk2"><svg class="ic14"><use href="#folder"/></svg>DAW</span>
          <span class="bk2"><svg class="ic14"><use href="#folder"/></svg>Travail POULT</span>
          <span class="bk2"><svg class="ic14"><use href="#folder"/></svg>English</span>
          <span class="bk2"><svg class="ic14"><use href="#folder"/></svg>Projet</span>
          <span class="bk2-more">»</span>
          <span class="ew-sep"></span>
          <span class="bk2"><svg class="ic14"><use href="#folder"/></svg>Tous les favoris</span>
        </div>
        <div class="err-page">
          <svg class="sad" viewBox="0 0 33 42" shape-rendering="crispEdges"><path d="M1.500 1.500h19l11 11v28h-30zM20.500 1.500v11h11" fill="none" stroke="#555" stroke-width="3"/><path d="M9 11h3v5H9zM9 31h3v-3h9v3h3v3h-6v-3h-5v3H9z" fill="#555"/></svg>
          <h2>Cette page ne fonctionne pas</h2>
          <p class="err-msg">Impossible de traiter cette demande via <b>guitariste82-001-site1.gtempurl.com</b> à l'heure actuelle.</p>
          <p class="err-code">HTTP ERROR 503</p>
          <span class="err-btn">Actualiser</span>
        </div>
      </div>
    </div>
    <div class="below"></div>
  </section>
</div>
</body>
</html>
```
FILE: styles.css
```css
*{box-sizing:border-box}
html,body{margin:0;padding:0;width:3840px;height:1218px;overflow:hidden;background:#fff}
body{font-family:Roboto,"Liberation Sans",sans-serif;color:#222}
.defs{position:absolute;width:0;height:0}
svg{display:block;flex:none;overflow:visible}
.ic11{width:11px;height:11px}.ic12{width:12px;height:12px}.ic14{width:14px;height:14px}.ic16{width:16px;height:16px}.ic18{width:18px;height:18px}.ic20{width:20px;height:20px}.ic24{width:24px;height:24px}.ic30{width:30px;height:30px}
.ic-dots{width:4px;height:16px}.ic-dots2{width:5px;height:20px}
.screens{display:grid;grid-template-columns:1920px 1920px;height:1218px}
.screen-left{position:relative;display:flex;flex-direction:column;height:1218px}
.blank-top{height:138px;background:#fff}

/* meet chrome */
.meet-chrome{height:120px;background:#fff;display:flex;flex-direction:column}
.mc-tabs{height:40px;background:#d3e3fd;display:flex;align-items:flex-end;padding-left:6px;color:#333}
.mc-chev{width:28px;height:28px;background:#e4eefd;border-radius:9px;display:flex;align-items:center;justify-content:center;margin-bottom:6px}
.mc-tab{width:232px;height:34px;background:#fff;border-radius:10px 10px 0 0;margin-left:6px;display:flex;align-items:center;padding-left:8px;font-size:15px}
.mc-title{margin-left:8px;width:131px;white-space:nowrap}
.ic-rec{width:16px;height:16px;margin-left:20px}
.mc-close{margin-left:11px}
.mc-new{margin:0 0 13px 13px}
.mc-winbtns{margin-left:auto;display:flex;align-items:center;gap:22px;padding:0 2px 15px 0;height:40px}
.mc-min{width:11px;height:2px;background:#333;margin-top:20px}
.ic-rest{width:12px;height:12px}
.mc-winbtns .ic-rest{margin-top:12px}
.mc-exit{width:24px;height:23px;background:#8a97a8;display:flex;align-items:center;justify-content:center;margin-left:-5px}
.ic-exit{width:18px;height:21px}
.mc-toolbar{height:46px;display:flex;align-items:flex-start;padding:6px 6px 0 4px;border-radius:10px 10px 0 0;color:#444}
.navbox{display:flex;width:117px}
.nav{width:36px;height:34px;display:flex;align-items:center;justify-content:center}
.dim{opacity:.45}
.mc-omni{width:1442px;height:34px;background:#edf2fa;border-radius:17px;display:flex;align-items:center;padding:0 16px 0 4px}
.site-chip{width:26px;height:26px;border-radius:13px;background:#fff;display:flex;align-items:center;justify-content:center;flex:none}
.mc-url{margin-left:6px;font-size:14.7px;white-space:nowrap}
.ic-mic{width:12px;height:20px;margin-left:auto}
.mc-star{margin-left:17px;color:#0b57d0}
.mc-tools{display:flex;align-items:center;height:34px;padding-left:16px;flex:1}
.ic-pdf{width:16px;height:18px}
.dark{color:#333}
.mc-tools .dark{margin-left:22px}
.mc-sep{width:1px;height:20px;background:#d0d7e2;margin-left:18px}
.ic-queue{width:16px;height:16px;margin-left:18px}
.avatar-pink{width:20px;height:20px;border-radius:50%;background:#f4527a;color:#fff;font-size:10px;display:flex;align-items:center;justify-content:center;margin-left:16px}
.relaunch{display:flex;align-items:center;justify-content:space-between;width:176px;height:34px;border-radius:17px;background:#d3e3fd;color:#1f2a44;padding:0 15px 0 14px;font-size:15px;margin-left:14px;white-space:nowrap}
.mc-bookmarks{height:34px;display:grid;grid-template-columns:82px 79px 144px 87px 69px 157px 114px 116px 35px 154px 160px 83px 153px 298px 23px 17px 1fr;padding:0 0 5px 12px;align-items:center;font-size:15px;color:#333;border-bottom:1px solid #e4e4e4}
.bk{display:flex;align-items:center;gap:8px;white-space:nowrap}
.bk-more{font-size:18px;color:#444;padding-left:0}
.bk-sep{width:1px;height:22px;background:#d8dde6}

/* meet stage */
.stage{flex:1;background:#202124;display:flex;flex-direction:column;position:relative;padding-top:17px}
.presenter{height:42px;margin-left:16px;width:1884px;background:#3c4043;border-radius:6px;display:flex;align-items:center;padding-left:17px;color:#e8eaed;font-size:15px;gap:16px}
.avatar-orange{width:24px;height:24px;border-radius:50%;background:#c8490c;color:#fff;font-size:11px;display:flex;align-items:center;justify-content:center;flex:none}
.shared{margin:16px 0 0 245px;width:1429px;height:804px;display:flex;flex-direction:column;background:#fff}
.sw-tabs{height:45px;background:#c8dfbc;display:flex;align-items:flex-end;padding-left:5px;border-radius:6px 6px 0 0;font-size:14px;color:#333;flex:none}
.sw-chev{width:31px;height:31px;background:#fff;border-radius:9px;display:flex;align-items:center;justify-content:center;margin-bottom:7px;flex:none}
.sw-tab{display:flex;align-items:center;height:38px;flex:none;padding-bottom:4px}
.blob{width:15px;height:17px;border-radius:50%;background:#2b2b2b;flex:none}
.sw-tt{white-space:nowrap;overflow:hidden}
.sw-t1{width:263px;margin-left:7px;padding-left:10px;gap:10px}
.sw-t1 .sw-tt{width:191px}
.sw-div{width:1px;height:26px;background:#e7f0e2;margin-bottom:9px;flex:none}
.sw-t2{width:270px;padding-left:12px;gap:11px}
.sw-t2 .sw-tt{width:188px}
.fade{-webkit-mask-image:linear-gradient(90deg,#000 88%,transparent)}
.ic-mt{width:16px;height:20px}
.sw-active{width:258px;background:#fff;border-radius:10px 10px 0 0;padding-left:8px;gap:10px}
.sw-active .sw-tt{width:191px}
.sw-t4{width:270px;padding-left:17px;gap:10px}
.sw-t4 .sw-tt{width:189px}
.greyish{color:#5f6368}
.sw-new{margin:0 0 13px 11px}
.sw-winbtns{margin-left:auto;display:flex;align-items:center;gap:38px;height:45px;padding:0 19px 8px 0}
.sw-min{width:12px;height:2px;background:#222}
.sw-close{color:#222}
.sw-toolbar{height:51px;background:#fff;border-bottom:3px solid #dcdcdc;display:flex;align-items:flex-start;padding:7px 0 0 0;flex:none;color:#444}
.sw-nav{width:133px;padding-left:2px}
.sw-nav .nav{height:37px;width:41px}
.sw-omni{width:1001px;height:37px;background:#dedfdf;border-radius:18px;display:flex;align-items:center;padding:0 14px 0 6px;flex:none}
.sw-url{margin-left:10px;font-size:15px;white-space:nowrap;color:#333}
.sw-star{margin-left:auto;color:#555}
.sw-av{margin:6px 0 0 21px;width:22px;height:24px;font-size:11px}
.sw-relaunch{display:flex;align-items:center;justify-content:space-between;width:230px;height:37px;border-radius:18px;background:#c8dfbc;margin-left:15px;padding:0 14px 0 13px;font-size:13.7px;color:#222;white-space:nowrap}

/* site in shared window */
.site{flex:1;display:flex;flex-direction:column;font-family:"Liberation Sans",Arial,sans-serif;font-size:18px;color:#000;background:#fff}
.site-head{height:111px;background:#f8f9fa;display:flex;align-items:center;padding:0 21px 0 13px;flex:none}
.logo{width:66px;display:flex;flex-direction:column;align-items:center;padding-top:8px}
.flame{width:41px;height:42px}
.logo-txt{font:700 9px/12px "DejaVu Sans",sans-serif;letter-spacing:.6px;color:#444;white-space:nowrap;margin-top:0}
.rings{width:34px;height:19px;margin-top:3px}
.brand{font-size:22.5px;margin-left:18px;color:#111;padding-bottom:2px}
.site-nav{margin-left:auto;display:flex;gap:18px;color:#666;padding-bottom:2px;font-size:18px}
.site-main{padding:0 87px 0 90px;flex:none;height:268px}
.site-main h1{margin:0;font-size:40px;line-height:46px;padding-top:0;font-weight:700;color:#222}
.cart{width:1252px;border-collapse:collapse;margin-top:14px;table-layout:fixed}
.cart th{text-align:left;padding:0 0 0 10px;height:40px;border-bottom:1px solid #ddd;font-size:18px;color:#000}
.c1{width:216px}.c2{width:186px}.c3{width:321px}.c4{width:210px}.c5{width:319px}
.cart td{padding:0 0 0 10px;font-size:18px;color:#222;border-bottom:1px solid #ddd}
.r1{height:48px}.r2{height:59px}
.btn{display:inline-flex;align-items:center;justify-content:center;background:#f44f3f;color:#fff;border-radius:4px;height:44px;font-size:18px}
.btn-vider{width:72px}
.btn-valider{width:360px;height:42px;margin-top:19px}
.site-foot{height:89px;background:#f4f4f4;display:flex;align-items:center;justify-content:center;font-size:18px;color:#222;flex:none;padding-bottom:16px}
.site-rest{flex:1;background:#fff}

/* taskbar */
.win-taskbar{height:44px;background:#1a1b1d;border-top:1px solid #555;display:flex;align-items:center;flex:none;color:#eee}
.tb-start{width:53px;display:flex;justify-content:center}
.ic-win{width:20px;height:18px}
.tb-search{width:322px;height:43px;background:#f1f1f1;color:#333;display:flex;align-items:center;padding-left:12px;gap:13px;font:18px "Open Sans",sans-serif;flex:none}
.ic-mag{width:18px;height:20px}
.tb-view{width:57px;display:flex;justify-content:center;flex:none}
.ic-tv{width:20px;height:24px}
.tb-apps{display:flex;flex:none}
.app{width:43px;height:43px;display:flex;align-items:center;justify-content:center;position:relative;flex:none}
.app.run::after{content:"";position:absolute;left:5px;right:5px;bottom:0;height:2px;background:#6aa6d8}
.app-on{background:#3f3f41}
.app-orange{background:#b96d1c}
.w-letter{font:700 8px "Liberation Sans",sans-serif;fill:#fff;text-anchor:middle}
.c-letter{font:700 8px Roboto,sans-serif;fill:#fff;text-anchor:middle}
.d-letter{font:700 8px Roboto,sans-serif;fill:#fff;text-anchor:middle}
.ij-letter{font:700 6.5px "Liberation Sans",sans-serif;fill:#fff;text-anchor:middle}
.tb-scroll{width:18px;height:43px;margin-left:1px;background:#f2f2f2;display:flex;flex-direction:column;align-items:center;justify-content:space-around;flex:none}
.tb-tray{display:grid;grid-template-columns:43px 59px 27px 27px 26px 28px 26px 31px 31px 94px 1fr;align-items:center;padding-left:20px;flex:1;height:43px}
.tr-temp{font:18px "Open Sans",sans-serif}
.tr-lang{font:15px "Open Sans",sans-serif}
.ic-trmic{width:12px;height:24px}
.tr-clock{display:flex;flex-direction:column;align-items:center;width:86px;font:13px/21px "Open Sans",sans-serif}
.tr-note{position:relative;padding-top:2px}
.ic-note{width:20px;height:26px}
.note-count{position:absolute;left:9px;top:16px;width:19px;height:19px;border-radius:50%;background:#222;border:1px solid #bbb;font:12px/17px "Open Sans",sans-serif;text-align:center}

/* meet bar */
.meet-bar{flex:1;display:flex;align-items:center;color:#fff}
.meet-id{width:725px;padding-left:25px;display:flex;align-items:center;font:15.5px "Inter","Open Sans",sans-serif;color:#e8eaed;letter-spacing:.3px;white-space:nowrap}
.meet-sep{width:1px;height:16px;background:#aaa;margin:0 12px}
.controls{display:flex;gap:12px;align-items:center}
.pill{width:65px;height:40px;background:#3c4043;border-radius:20px;display:flex;align-items:center;position:relative;padding-left:7px;justify-content:space-between}
.pill-cam{width:66px}
.up{transform:rotate(180deg);color:#ccc}
.red-dot{width:40px;height:40px;border-radius:50%;background:#f4532f;display:flex;align-items:center;justify-content:center;color:#fff}
.round{width:40px;height:40px;border-radius:50%;background:#3c4043;display:flex;align-items:center;justify-content:center}
.round-more{width:38px;margin:0 1px;color:#fff}
.round-end{width:56px;height:40px;border-radius:20px;background:#f4532f;display:flex;align-items:center;justify-content:center}
.side-icons{margin-left:auto;margin-right:11px;display:grid;grid-template-columns:repeat(5,48.500px)}
.si{position:relative;display:flex;justify-content:center}
.people-badge{position:absolute;left:27px;top:-21px;width:21px;height:21px;border-radius:50%;background:#5f6368;color:#fff;font-size:11px;display:flex;align-items:center;justify-content:center}

/* tile */
.tile{position:absolute;left:1653px;top:732px;width:235px;height:132px;border-radius:8px;background:#3c4043;color:#fff;display:flex;flex-direction:column;align-items:center}
.tile-avatar{width:71px;height:71px;border-radius:50%;background:#f4527a;margin-top:30px;display:flex;align-items:center;justify-content:center;font:32px Roboto,sans-serif}
.tile-name{align-self:flex-start;margin:2px 0 0 17px;font-size:14px}
.tile-mute{position:absolute;right:13px;top:11px;width:25px;height:25px;border-radius:50%;background:#2f3133;display:flex;align-items:center;justify-content:center}

/* overlay */
.toast{position:absolute;left:737px;top:183px;width:445px;height:50px;background:#4e5155;color:#fff;display:flex;align-items:center;padding:6px 0 0 39px;font-size:14.5px;white-space:nowrap}
.esc{border:1px solid #eee;border-radius:3px;padding:0 6px;height:32px;display:flex;align-items:center;margin:-3px 7px 0 7px;width:51px}
.cur{position:absolute;width:12px;height:20px}
.cur-left{left:19px;top:860px}
.cur-shared{left:1093px;top:1030px}

/* right */
.screen-right{display:flex;flex-direction:column;height:1218px}
.desktop{height:1078px;position:relative;overflow:hidden;border-bottom:2px solid #0c2b5c;background:
 radial-gradient(520px 620px at 1530px 470px,rgba(20,120,255,.9),rgba(20,120,255,0) 100%),
 radial-gradient(900px 500px at 600px -100px,rgba(0,130,230,.35),rgba(0,130,230,0)),
 linear-gradient(100deg,#00a8f5 0%,#0094ec 18%,#0a7be2 38%,#0a62d2 60%,#0650bf 76%,#0640a8 100%)}
.below{flex:1;background:#fefefe}
.logo-panes{position:absolute;left:1504px;top:382px;width:37px;height:358px}
.edge-back{position:absolute;left:493px;top:12px;width:666px;height:60px;background:#1f3e5c;border-radius:24px 24px 0 0;display:flex;align-items:flex-start;padding:14px 26px 0 20px;color:#8ea1b3;font-size:14px;gap:15px}
.ic-eb{width:18px;height:18px}
.eb-text{white-space:nowrap}
.eb-right{margin-left:auto;display:flex;gap:22px;align-items:center}
.eb-dots{font-size:16px;line-height:14px;letter-spacing:0}
.file-ic{position:absolute;left:1177px;top:9px;width:30px;height:34px}
.error-win{position:absolute;left:81px;top:40px;width:1431px;height:977px;display:flex;flex-direction:column;background:#fff;box-shadow:0 0 10px rgba(0,20,70,.45)}
.ew-tabs{height:40px;background:#6c6c6c;display:flex;align-items:flex-end;padding-left:8px;color:#fff;flex:none}
.ew-chev{width:26px;height:28px;background:#353535;border-radius:8px;display:flex;align-items:center;justify-content:center;margin-bottom:6px;flex:none}
.ew-tab{width:232px;height:34px;margin-left:7px;background:#353535;border-radius:10px 10px 0 0;display:flex;align-items:center;padding:0 10px;font-size:11.5px;flex:none}
.grey6{color:#a8a8a8}
.ew-title{margin-left:9px;width:166px;overflow:hidden;white-space:nowrap;margin-right:11px}
.ew-new{width:26px;height:28px;border-radius:13px;background:#353535;margin:0 0 6px 7px;display:flex;align-items:center;justify-content:center;color:#a8a8a8;flex:none}
.ew-winbtns{margin-left:auto;display:flex;align-items:center;gap:34px;height:40px;padding:0 16px 0 0}
.ew-min{width:11px;height:1px;background:#9c9c9c}
.ew-max{width:10px;height:16px;border:1px solid #9c9c9c}
.ew-toolbar{height:46px;background:#353535;display:flex;align-items:flex-start;padding-top:6px;color:#fff;flex:none}
.ew-nav{display:flex;gap:22px;width:158px;padding:10px 0 0 16px}
.grey9{color:#8a8a8a}
.ew-omni{width:1026px;height:34px;background:#1b1b1b;border-radius:17px;display:flex;align-items:center;padding:0 16px 0 4px;flex:none}
.ew-info{width:24px;height:24px;border-radius:12px;background:#3a3a3a;display:flex;align-items:center;justify-content:center}
.ew-url{margin-left:9px;font-size:13px;color:#e8e8e8;white-space:nowrap}
.dimurl{color:#8a8a8a}
.ew-star{margin-left:auto;color:#ddd}
.ew-tools{display:grid;grid-template-columns:34px 37px 36px 35px 17px 44px 1fr;align-items:center;height:34px;flex:1;padding-left:20px}
.ew-sep{width:1px;height:22px;background:#1c1c1c;display:block}
.ew-avatar{width:20px;height:24px;border-radius:50%;background:#0a5ea8;font-size:11px;display:flex;align-items:center;justify-content:center}
.ew-bookmarks{height:34px;background:#353535;border-bottom:2px solid #555;display:grid;grid-template-columns:101px 70px 52px 86px 67px 155px 53px 75px 81px 92px 72px 69px 114px 80px 88px 29px 16px 1fr;padding:0 0 3px 12px;align-items:center;color:#e8e8e8;font-size:12.5px;flex:none}
.bk2{display:flex;align-items:center;gap:9px;white-space:nowrap}
.bk2 .ic14{color:#cfcfcf}
.dsm{width:14px;height:16px;background:#1670d6;color:#fff;font:700 5px/16px Roboto,sans-serif;text-align:center;flex:none;margin-right:-2px}
.bk2-more{font-size:16px;padding-left:0}
.err-page{flex:1;background:#fff;padding:151px 0 0 416px;font-family:"Open Sans",sans-serif;color:#5f6368}
.sad{width:33px;height:42px}
.err-page h2{margin:48px 0 0;font:600 22.500px/30px "Open Sans",sans-serif;color:#202124;white-space:nowrap}
.err-msg{margin:15px 0 0;width:620px;font-size:14.200px;line-height:24px}
.err-msg b{font-weight:700}
.err-code{margin:14px 0 0;font-size:11.300px;line-height:14px}
.err-btn{margin-top:57px;width:90px;height:31px;border-radius:16px;background:#1a73e8;color:#fff;font:500 13.500px Roboto,sans-serif;display:flex;align-items:center;justify-content:center}
```
